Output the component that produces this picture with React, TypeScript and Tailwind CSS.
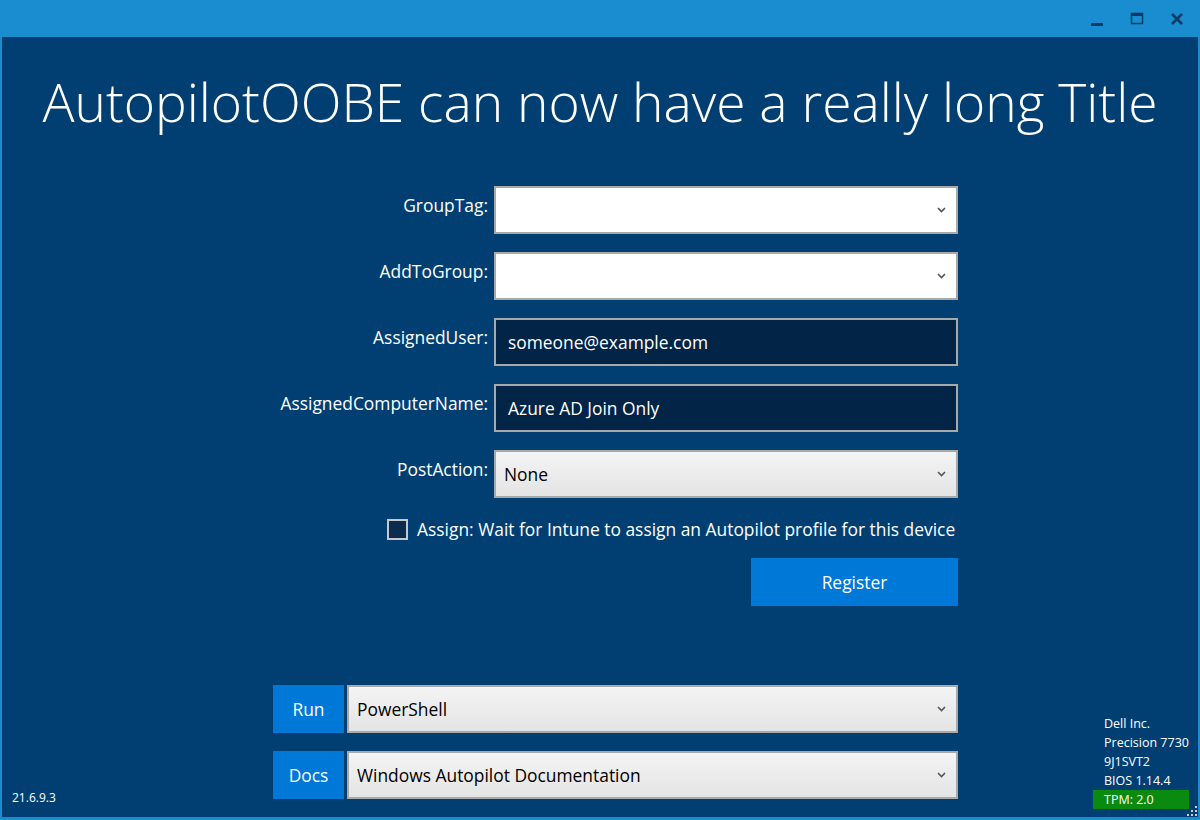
import { ReactNode } from "react";

const font = { fontFamily: '"Open Sans", "Noto Sans", sans-serif' };

function Chevron() {
    return (
        <svg width="9" height="6" viewBox="0 0 9 6" className="shrink-0">
            <polyline points="1,1 4.5,4.5 8,1" fill="none" stroke="#555" strokeWidth="1.6" />
        </svg>
    );
}

function Row({ label, children }: { label: string; children: ReactNode }) {
    return (
        <div className="flex gap-[6px]">
            <div className="w-[215px] pt-[6px] text-right text-[17.4px] text-white whitespace-nowrap">{label}</div>
            <div className="w-[464px]">{children}</div>
        </div>
    );
}

function WhiteCombo() {
    return (
        <div className="h-[48px] border-2 border-[#a9a9a9] bg-white flex items-center justify-end px-[10px]">
            <Chevron />
        </div>
    );
}

function TextBox({ value }: { value: string }) {
    return (
        <div className="h-[48px] border-2 border-[#a9a9a9] bg-[#012447] flex items-center px-[12px] text-[17.4px] text-white">
            {value}
        </div>
    );
}

function GrayCombo({ value, className = "" }: { value: string; className?: string }) {
    return (
        <div
            className={`h-[48px] border-2 border-[#a9a9a9] bg-gradient-to-b from-[#f4f4f4] to-[#e4e4e4] flex items-center justify-between pl-[8px] pr-[10px] text-[17.4px] text-black ${className}`}
        >
            <span>{value}</span>
            <Chevron />
        </div>
    );
}

export default function App() {
    return (
        <div className="w-[1200px] h-[820px] bg-[#1a8dd0] flex flex-col px-[2px] pb-[3px]" style={font}>
            {/* title bar */}
            <div className="h-[37px] flex items-center justify-end gap-[26px] pr-[14px] text-[#0f3b66]">
                <svg width="14" height="14" viewBox="0 0 14 14">
                    <rect x="1" y="11" width="12" height="3" fill="currentColor" />
                </svg>
                <svg width="14" height="14" viewBox="0 0 14 14">
                    <rect x="1.5" y="1.5" width="11" height="10" fill="none" stroke="currentColor" strokeWidth="1.5" />
                    <rect x="1" y="1" width="12" height="3" fill="currentColor" />
                </svg>
                <svg width="14" height="14" viewBox="0 0 14 14">
                    <path d="M2 2 L12 12 M12 2 L2 12" stroke="currentColor" strokeWidth="2.6" />
                </svg>
            </div>

            {/* body */}
            <div className="relative flex-1 bg-[#013f72] flex flex-col">
                <h1 className="pt-[32px] text-center text-[53.3px] font-light leading-[66px] text-white whitespace-nowrap">
                    AutopilotOOBE can now have a really long Title
                </h1>

                <div className="mt-[51px] ml-[271px] flex flex-col gap-[18px]">
                    <Row label="GroupTag:">
                        <WhiteCombo />
                    </Row>
                    <Row label="AddToGroup:">
                        <WhiteCombo />
                    </Row>
                    <Row label="AssignedUser:">
                        <TextBox value="someone@example.com" />
                    </Row>
                    <Row label="AssignedComputerName:">
                        <TextBox value="Azure AD Join Only" />
                    </Row>
                    <Row label="PostAction:">
                        <GrayCombo value="None" />
                    </Row>
                </div>

                <div className="mt-[18px] ml-[385px] flex items-center gap-[9px] text-[17.4px] text-white whitespace-nowrap">
                    <div className="w-[21px] h-[21px] border-2 border-[#c8c8c8] bg-[#0b2b4f]" />
                    <span>Assign: Wait for Intune to assign an Autopilot profile for this device</span>
                </div>

                <div className="mt-[16px] ml-[749px]">
                    <button className="w-[207px] h-[48px] bg-[#0078d7] text-white text-[17.4px]">Register</button>
                </div>

                <div className="mt-auto flex items-end pb-[18px]">
                    <div className="w-[271px] pl-[10px] -mb-[8px] text-[12px] text-white">21.6.9.3</div>
                    <div className="w-[685px] flex flex-col gap-[18px]">
                        <div className="flex gap-[3px]">
                            <button className="w-[71px] h-[48px] bg-[#0078d7] text-white text-[17.4px]">Run</button>
                            <GrayCombo value="PowerShell" className="flex-1" />
                        </div>
                        <div className="flex gap-[3px]">
                            <button className="w-[71px] h-[48px] bg-[#0078d7] text-white text-[17.4px]">Docs</button>
                            <GrayCombo value="Windows Autopilot Documentation" className="flex-1" />
                        </div>
                    </div>
                    <div className="flex-1 flex justify-end pr-[9px]">
                        <div className="w-[96px] text-[12.5px] leading-[19px] text-white -mb-[10px] whitespace-nowrap">
                            <div className="pl-[11px]">Dell Inc.</div>
                            <div className="pl-[11px]">Precision 7730</div>
                            <div className="pl-[11px]">9J1SVT2</div>
                            <div className="pl-[11px]">BIOS 1.14.4</div>
                            <div className="pl-[11px] bg-[#0a8a0e]">TPM: 2.0</div>
                        </div>
                    </div>
                </div>

                {/* resize grip */}
                <svg width="10" height="10" viewBox="0 0 10 10" className="absolute right-[1px] bottom-[1px]">
                    <rect x="8" y="0" width="2" height="2" fill="#d0d0d0" />
                    <rect x="4" y="4" width="2" height="2" fill="#d0d0d0" />
                    <rect x="8" y="4" width="2" height="2" fill="#d0d0d0" />
                    <rect x="0" y="8" width="2" height="2" fill="#d0d0d0" />
                    <rect x="4" y="8" width="2" height="2" fill="#d0d0d0" />
                    <rect x="8" y="8" width="2" height="2" fill="#d0d0d0" />
                </svg>
            </div>
        </div>
    );
}
